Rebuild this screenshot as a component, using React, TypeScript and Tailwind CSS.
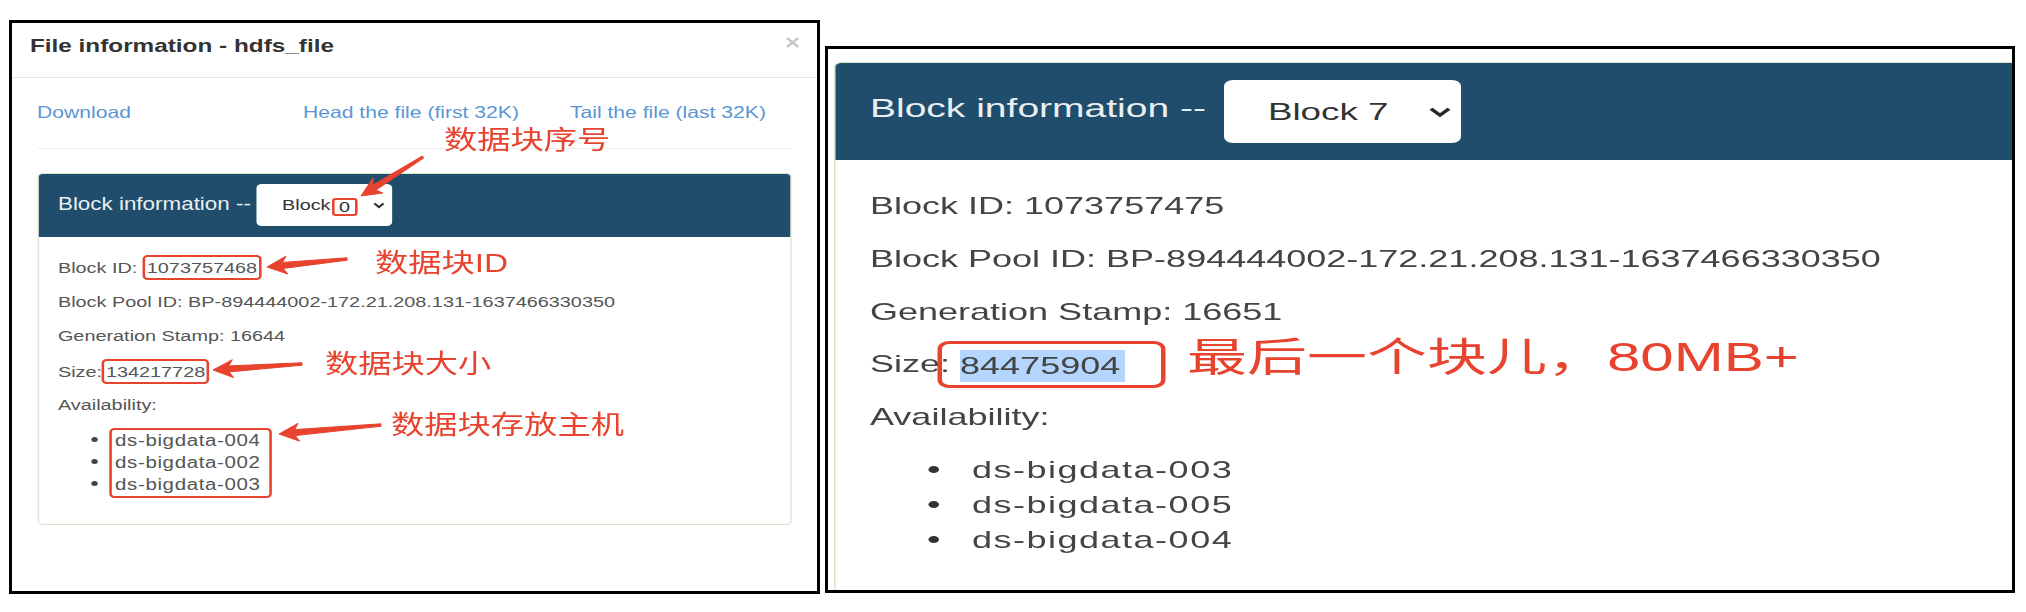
const arrows: [number, number, number, number][] = [
  [423, 157, 361, 196],
  [347, 259, 267, 267],
  [302, 364, 213, 370],
  [381, 425, 279, 434],
];

// tapered annotation arrow, tail -> tip
function arrowPoints(x1: number, y1: number, x2: number, y2: number) {
  const dx = x2 - x1;
  const dy = y2 - y1;
  const len = Math.hypot(dx, dy);
  const ux = dx / len;
  const uy = dy / len;
  const nx = -uy;
  const ny = ux;
  const head = 20;
  const hw = 9;
  const neck = 3;
  const tail = 1.2;
  const bx = x2 - ux * head;
  const by = y2 - uy * head;
  const pts = [
    [x1 + nx * tail, y1 + ny * tail],
    [bx + ux * 4 + nx * neck, by + uy * 4 + ny * neck],
    [bx + nx * hw, by + ny * hw],
    [x2, y2],
    [bx - nx * hw, by - ny * hw],
    [bx + ux * 4 - nx * neck, by + uy * 4 - ny * neck],
    [x1 - nx * tail, y1 - ny * tail],
  ];
  return pts.map((p) => `${p[0].toFixed(1)},${p[1].toFixed(1)}`).join(" ");
}

const FileInfoModal = () => {
  return (
    <div className="h-[574px] w-[811px] shrink-0 overflow-hidden border-[3px] border-black">
      <div className="w-[628.9px] origin-left scale-x-[1.28]">
        <div className="flex h-[55px] items-start justify-between border-b border-[#e5e5e5] pl-[14px] pr-[13.3px]">
          <h4 className="pt-[9.5px] text-[19px] font-bold leading-[26px] text-[#333]">
            File information - hdfs_file
          </h4>
          <svg className="mt-[14px]" width="11.7" height="11" viewBox="0 0 12 11">
            <path d="M1.5 1 L10.5 10 M10.5 1 L1.5 10" stroke="#c4c4c4" strokeWidth="2.2" fill="none" />
          </svg>
        </div>

        <div className="px-[19.5px] pt-[23.3px]">
          <div className="flex h-[22px] text-[16.5px] leading-[22px] text-[#5b96d4]">
            <a className="w-[207.8px]">Download</a>
            <a className="w-[208.6px]">Head the file (first 32K)</a>
            <a>Tail the file (last 32K)</a>
          </div>
          <hr className="mt-[24.7px] border-[#eeeeee]" />

          <div className="mt-[24px] rounded-[4px] border border-[#d6e5cb]">
            <div className="flex h-[63px] items-center rounded-t-[3px] bg-[#1f4d6b] pl-[15.4px]">
              <span className="mb-[3px] text-[17.5px] leading-[20px] text-[#e9eef1]">Block information --</span>
              <div className="ml-[4.8px] flex h-[42px] w-[105.5px] items-center rounded-[4px] bg-white pl-[19.5px] pr-[5.5px] text-[15.5px] text-[#333]">
                <span className="leading-[20px]">
                  Block
                  <span className="ml-[1.2px] inline-block rounded-[3px] border-2 border-[#e8432e] px-[3.5px] align-[-2px] leading-[14px]">
                    0
                  </span>
                </span>
                <svg className="ml-auto" width="9.4" height="7" viewBox="0 0 10 7">
                  <polyline points="1.2,1.2 5,5.3 8.8,1.2" stroke="#333" strokeWidth="2" fill="none" />
                </svg>
              </div>
            </div>

            <div className="flex flex-col gap-[10px] px-[15.4px] pb-[26px] pt-[18.4px] text-[15.5px] text-[#555]">
              <p className="h-[24.5px] leading-[24.5px]">
                Block ID:
                <span className="ml-[4.4px] inline-block rounded-[4px] border-2 border-[#e8432e] px-[1px] leading-[21px]">
                  1073757468
                </span>
              </p>
              <p className="h-[24.5px] leading-[24.5px]">Block Pool ID: BP-894444002-172.21.208.131-1637466330350</p>
              <p className="h-[24.5px] leading-[24.5px]">Generation Stamp: 16644</p>
              <p className="h-[24.5px] leading-[24.5px]">
                Size:
                <span className="inline-block rounded-[4px] border-2 border-[#e8432e] px-[1px] leading-[21px]">
                  134217728
                </span>
              </p>
              <p className="h-[24.5px] leading-[24.5px]">Availability:</p>
              <ul className="ml-[40.6px] w-[127px] rounded-[4px] border-2 border-[#e8432e] px-[2px] text-[16px] leading-[22px] tracking-[0.5px]">
                {["ds-bigdata-004", "ds-bigdata-002", "ds-bigdata-003"].map((host) => (
                  <li key={host} className="relative">
                    <span className="absolute left-[-18.2px] top-[7.5px] h-[5px] w-[5px] rounded-full bg-[#444]" />
                    {host}
                  </li>
                ))}
              </ul>
            </div>
          </div>
        </div>
      </div>
    </div>
  );
};

const BlockPanelZoom = () => {
  return (
    <div className="ml-[5px] mt-[26px] h-[547px] w-[1190px] shrink-0 overflow-hidden border-[3px] border-black">
      <div className="w-[789.3px] origin-left scale-x-[1.5] pl-[4px] pt-[13px]">
        <div className="w-[820px] rounded-t-[5px] border border-[#d6e5cb]">
          <div className="flex h-[97px] items-center rounded-t-[4px] bg-[#1f4d6b] pl-[23px]">
            <span className="mb-[7px] text-[26px] leading-[30px] text-[#e9eef1]">Block information --</span>
            <div className="ml-[12px] flex h-[63px] w-[158px] items-center rounded-[6px] bg-white pl-[29.3px] pr-[6px] text-[24.5px] text-[#333]">
              <span className="leading-[30px]">Block 7</span>
              <svg className="ml-auto" width="16" height="10" viewBox="0 0 16 10">
                <polyline points="2,1.8 8,8.2 14,1.8" stroke="#2a2a2a" strokeWidth="2.8" fill="none" />
              </svg>
            </div>
          </div>

          <div className="flex flex-col gap-[17.75px] px-[23px] pb-[120px] pt-[28.2px] text-[24px] text-[#444]">
            <p className="h-[35px] leading-[35px]">Block ID: 1073757475</p>
            <p className="h-[35px] leading-[35px]">Block Pool ID: BP-894444002-172.21.208.131-1637466330350</p>
            <p className="h-[35px] leading-[35px]">Generation Stamp: 16651</p>
            <p className="relative h-[35px] leading-[35px]">
              Size:{" "}
              <span className="inline-block bg-[#b4d5fd] pr-[3px] align-[-2px] leading-[32px]">84475904</span>
              <span className="absolute left-[44.7px] top-[-5.45px] h-[47px] w-[152px] rounded-[8px] border-[3px] border-[#e8432e]" />
            </p>
            <p className="h-[35px] leading-[35px]">Availability:</p>
            <ul className="ml-[68px] tracking-[1px]">
              {["ds-bigdata-003", "ds-bigdata-005", "ds-bigdata-004"].map((host) => (
                <li key={host} className="relative h-[35px] leading-[35px]">
                  <span className="absolute left-[-28.8px] top-[14.5px] h-[7px] w-[7px] rounded-full bg-[#333]" />
                  {host}
                </li>
              ))}
            </ul>
          </div>
        </div>
      </div>
    </div>
  );
};

const Annotations = () => {
  return (
    <div className="pointer-events-none absolute inset-0">
      <svg className="absolute inset-0" width="2026" height="612">
        {arrows.map(([x1, y1, x2, y2], i) => (
          <polygon
            key={i}
            points={arrowPoints(x1, y1, x2, y2)}
            fill="#e8432e"
            stroke="#e8432e"
            strokeWidth="1"
            strokeLinejoin="round"
          />
        ))}
      </svg>
      <span className="absolute left-[444px] top-[127.4px] origin-left scale-x-[1.28] whitespace-nowrap text-[26px] leading-[26px] text-[#e8432e]">
        数据块序号
      </span>
      <span className="absolute left-[375px] top-[250px] origin-left scale-x-[1.28] whitespace-nowrap text-[26px] leading-[26px] text-[#e8432e]">
        数据块ID
      </span>
      <span className="absolute left-[325px] top-[351.4px] origin-left scale-x-[1.28] whitespace-nowrap text-[26px] leading-[26px] text-[#e8432e]">
        数据块大小
      </span>
      <span className="absolute left-[391px] top-[412px] origin-left scale-x-[1.28] whitespace-nowrap text-[26px] leading-[26px] text-[#e8432e]">
        数据块存放主机
      </span>
      <span className="absolute left-[1187px] top-[336.5px] origin-left scale-x-[1.5] whitespace-nowrap text-[40px] leading-[40px] text-[#e8432e]">
        最后一个块儿，80MB+
      </span>
    </div>
  );
};

export default function App() {
  return (
    <div className="relative h-[612px] w-[2026px] overflow-hidden bg-white font-['Liberation_Sans','Noto_Sans_CJK_SC',sans-serif]">
      <div className="flex items-start pl-[9px] pt-[20px]">
        <FileInfoModal />
        <BlockPanelZoom />
      </div>
      <Annotations />
    </div>
  );
}
